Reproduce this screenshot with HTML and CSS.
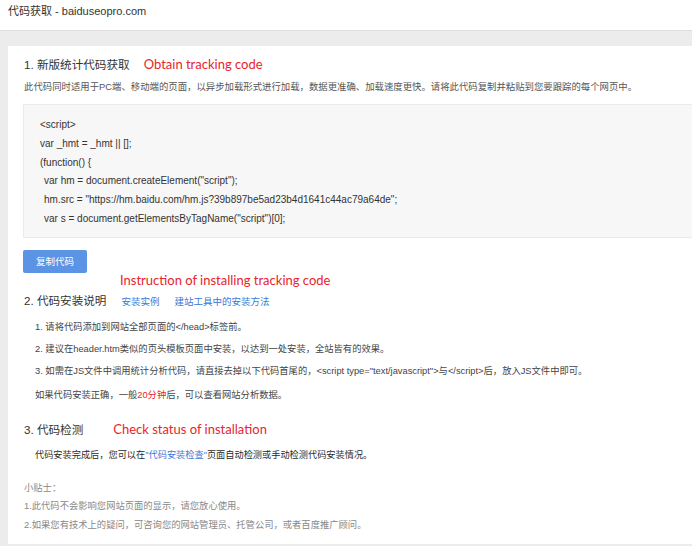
FILE: index.html
```html
<!DOCTYPE html>
<html lang="zh-CN">
<head>
    <meta charset="UTF-8">
    <title>代码获取 - baiduseopro.com</title>
    <link rel="stylesheet" href="styles.css">
</head>
<body>
    <div class="topbar">代码获取 - baiduseopro.com</div>

    <div class="page">
        <div class="card">
            <!-- 1. 代码获取 -->
            <h2 class="sec-title">1. 新版统计代码获取<span class="note note-1">Obtain tracking code</span></h2>
            <p class="desc">此代码同时适用于PC端、移动端的页面，以异步加载形式进行加载，数据更准确、加载速度更快。请将此代码复制并粘贴到您要跟踪的每个网页中。</p>

            <div class="code-box">
                <div>&lt;script&gt;</div>
                <div>var _hmt = _hmt || [];</div>
                <div>(function() {</div>
                <div class="indent">var hm = document.createElement("script");</div>
                <div class="indent">hm.src = "https://hm.baidu.com/hm.js?39b897be5ad23b4d1641c44ac79a64de";</div>
                <div class="indent">var s = document.getElementsByTagName("script")[0];</div>
            </div>

            <div class="btn">复制代码</div>
            <div class="note note-2">Instruction of installing tracking code</div>

            <!-- 2. 安装说明 -->
            <h2 class="sec-title sec-2">2. 代码安装说明<a class="link" href="#">安装实例</a><a class="link" href="#">建站工具中的安装方法</a></h2>
            <ol class="steps">
                <li>1. 请将代码添加到网站全部页面的&lt;/head&gt;标签前。</li>
                <li>2. 建议在header.htm类似的页头模板页面中安装，以达到一处安装，全站皆有的效果。</li>
                <li>3. 如需在JS文件中调用统计分析代码，请直接去掉以下代码首尾的，&lt;script type="text/javascript"&gt;与&lt;/script&gt;后，放入JS文件中即可。</li>
            </ol>
            <p class="tip-ok">如果代码安装正确，一般<span class="red">20分钟</span>后，可以查看网站分析数据。</p>

            <!-- 3. 代码检测 -->
            <h2 class="sec-title sec-3">3. 代码检测<span class="note note-3">Check status of installation</span></h2>
            <p class="check">代码安装完成后，您可以在<a class="link-inline" href="#">"代码安装检查"</a>页面自动检测或手动检测代码安装情况。</p>

            <div class="tips">
                <p>小贴士：</p>
                <p>1.此代码不会影响您网站页面的显示，请您放心使用。</p>
                <p>2.如果您有技术上的疑问，可咨询您的网站管理员、托管公司，或者百度推广顾问。</p>
            </div>
        </div>
    </div>
</body>
</html>
```

FILE: styles.css
```css
body {
    margin: 0;
    padding: 0;
    font-family: "Liberation Sans", Arial, "Noto Sans CJK SC", sans-serif;
    background-color: #ececec;
    color: #333;
    overflow: hidden;
}

.topbar {
    height: 30px;
    line-height: 22px;
    padding-left: 8px;
    font-size: 11px;
    color: #333;
    background: white;
    border-bottom: 1px solid #dedede;
}

.page {
    padding: 15px 0 0 8px;
}

.card {
    height: 498px;
    background: white;
    padding: 0 0 0 16px;
    box-sizing: border-box;
}

.sec-title {
    margin: 0;
    padding-top: 8px;
    font-size: 11.6px;
    font-weight: normal;
    color: #333;
    height: 20px;
    line-height: 20px;
    white-space: nowrap;
}

.note {
    font-family: Lato, "Open Sans", sans-serif;
    font-size: 13px;
    color: #e8242c;
    font-weight: normal;
}

.note-1 {
    margin-left: 14px;
}

.desc {
    margin: 5px 0 0 0;
    font-size: 9.4px;
    line-height: 16px;
    color: #555;
    white-space: nowrap;
}

.code-box {
    margin: 9px -2px 0 -1px;
    padding: 11px 0 8px 16px;
    background: #f7f7f7;
    border: 1px solid #ebebeb;
    font-size: 10px;
    line-height: 18.8px;
    color: #333;
    white-space: nowrap;
}

.indent {
    padding-left: 4px;
}

.btn {
    margin-top: 12px;
    margin-left: -1px;
    width: 64px;
    height: 23px;
    line-height: 23px;
    text-align: center;
    background-color: #5b94e4;
    color: white;
    font-size: 9.5px;
    border-radius: 2px;
}

.note-2 {
    margin: -1px 0 0 96px;
    height: 16px;
    line-height: 16px;
}

.sec-2 {
    padding-top: 3.5px;
}

.link {
    color: #3a78d6;
    font-size: 9.5px;
    text-decoration: none;
    margin-left: 15px;
}

.steps {
    list-style: none;
    margin: 4.5px 0 0 11px;
    padding: 0;
    font-size: 9.3px;
    color: #444;
    white-space: nowrap;
}

.steps li {
    height: 22px;
    line-height: 22px;
}

.tip-ok {
    margin: 2px 0 0 11px;
    font-size: 9.3px;
    line-height: 22px;
    color: #444;
}

.red {
    color: #e8242c;
}

.sec-3 {
    padding-top: 13px;
}

.note-3 {
    margin-left: 30px;
}

.check {
    margin: 8px 0 0 11px;
    font-size: 9.2px;
    line-height: 16px;
    color: #2a2a2a;
}

.link-inline {
    color: #3a78d6;
    text-decoration: none;
}

.tips {
    margin-top: 16px;
    font-size: 9.3px;
    color: #888;
}

.tips p {
    margin: 0;
    height: 18.5px;
    line-height: 18.5px;
}
```
